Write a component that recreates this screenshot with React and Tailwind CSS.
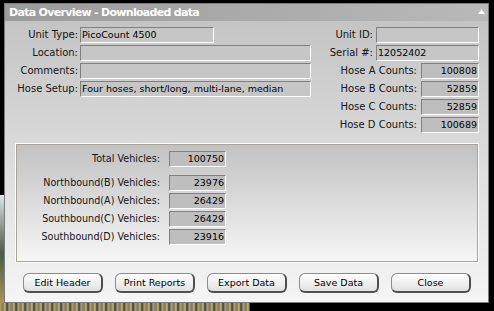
import React from "react";

const inputBase =
  "h-[16px] border border-t-[#808080] border-l-[#808080] border-r-white border-b-white flex items-center text-[9.5px] leading-none text-black overflow-hidden whitespace-nowrap";

function TextBox({ w, children }) {
  return <div className={`${inputBase} ${w} bg-[#c6c6c6] pl-[1px]`}>{children}</div>;
}

function NumBox({ w, children }) {
  return (
    <div className={`${inputBase} ${w} bg-[#bebebe] justify-end pr-[1px]`}>{children}</div>
  );
}

function Label({ w, size = "text-[10px]", children }) {
  return (
    <div className={`${w} ${size} text-right leading-none text-[#141414] whitespace-nowrap`}>{children}</div>
  );
}

function Button({ children }) {
  return (
    <div className="w-[80px] h-[20px] rounded-[6px] border border-t-[#8c8c8c] border-l-[#8c8c8c] border-r-2 border-b-2 border-r-[#505050] border-b-[#505050] bg-linear-to-b from-white to-[#e2e2e2] flex items-center justify-center text-[9.5px] leading-none text-black">
      {children}
    </div>
  );
}

export default function App() {
  return (
    <div className="relative w-[494px] h-[311px] bg-black overflow-hidden font-['DejaVu_Sans',sans-serif]">
      {/* desktop wallpaper peeking out */}
      <div className="absolute left-0 top-[195px] w-[250px] h-[116px] bg-linear-to-b from-[#dfe7ef] via-[#4c5a48] to-[#b59f58]" />
      <div className="absolute left-0 top-[303px] w-[250px] h-[8px] bg-[repeating-linear-gradient(90deg,#b9a458_0px,#77746a_3px,#cdb96c_5px,#3a3a34_7px,#9d9686_9px)]" />

      {/* window */}
      <div className="absolute left-[4px] top-[3px] w-[485px] h-[300px] border border-[#7c7c7c] flex flex-col">
        {/* title bar */}
        <div className="h-[17px] shrink-0 bg-linear-to-r from-[#9b9b9b] to-[#b9b9b9] flex items-center justify-between pl-[4px] pr-[3px]">
          <span className="text-white font-bold text-[11px] leading-none tracking-[-0.7px]">
            Data Overview - Downloaded data
          </span>
          <svg width="7" height="5" viewBox="0 0 7 5" className="mb-[2px]">
            <polygon points="3.5,0 7,5 0,5" fill="#ffffff" />
          </svg>
        </div>

        {/* body */}
        <div className="flex-1 bg-linear-to-b from-[#c4c4c4] to-[#f5f5f5] flex flex-col">
          {/* top section */}
          <div className="flex justify-between pt-[6px] pr-[9px]">
            <div className="flex flex-col gap-[2px]">
              <div className="flex items-center">
                <Label w="w-[73px]">Unit Type:</Label>
                <div className="ml-[2px]">
                  <TextBox w="w-[134px]">PicoCount 4500</TextBox>
                </div>
              </div>
              <div className="flex items-center">
                <Label w="w-[73px]">Location:</Label>
                <div className="ml-[2px]">
                  <TextBox w="w-[231px]" />
                </div>
              </div>
              <div className="flex items-center">
                <Label w="w-[73px]">Comments:</Label>
                <div className="ml-[2px]">
                  <TextBox w="w-[231px]" />
                </div>
              </div>
              <div className="flex items-center">
                <Label w="w-[73px]">Hose Setup:</Label>
                <div className="ml-[2px]">
                  <TextBox w="w-[231px]">Four hoses, short/long, multi-lane, median</TextBox>
                </div>
              </div>
            </div>

            <div className="flex flex-col gap-[2px] items-end">
              <div className="flex items-center">
                <Label w="w-auto">Unit ID:</Label>
                <div className="ml-[3px]">
                  <TextBox w="w-[103px]" />
                </div>
              </div>
              <div className="flex items-center">
                <Label w="w-auto">Serial #:</Label>
                <div className="ml-[3px]">
                  <TextBox w="w-[103px]">12052402</TextBox>
                </div>
              </div>
              {[
                ["Hose A Counts:", "100808"],
                ["Hose B Counts:", "52859"],
                ["Hose C Counts:", "52859"],
                ["Hose D Counts:", "100689"],
              ].map(([l, v]) => (
                <div key={l} className="flex items-center">
                  <Label w="w-auto">{l}</Label>
                  <div className="ml-[4px]">
                    <NumBox w="w-[58px]">{v}</NumBox>
                  </div>
                </div>
              ))}
            </div>
          </div>

          {/* group box */}
          <div className="mt-[10px] ml-[10px] mr-[9px] h-[120px] border border-white">
            <div className="h-full border border-[#a8a596] bg-linear-to-b from-[#c2c2c2] to-[#f6f6f6] pt-[6px] flex flex-col">
              <div className="flex items-center">
                <Label w="w-[143px]" size="text-[9.6px]">Total Vehicles:</Label>
                <div className="ml-[9px]">
                  <NumBox w="w-[57px]">100750</NumBox>
                </div>
              </div>
              <div className="flex flex-col gap-[2px] mt-[8px]">
                {[
                  ["Northbound(B) Vehicles:", "23976"],
                  ["Northbound(A) Vehicles:", "26429"],
                  ["Southbound(C) Vehicles:", "26429"],
                  ["Southbound(D) Vehicles:", "23916"],
                ].map(([l, v]) => (
                  <div key={l} className="flex items-center">
                    <Label w="w-[143px]" size="text-[9.6px]">{l}</Label>
                    <div className="ml-[9px]">
                      <NumBox w="w-[57px]">{v}</NumBox>
                    </div>
                  </div>
                ))}
              </div>
            </div>
          </div>

          {/* buttons */}
          <div className="mt-[10px] ml-[18px] flex gap-[12px]">
            <Button>Edit Header</Button>
            <Button>Print Reports</Button>
            <Button>Export Data</Button>
            <Button>Save Data</Button>
            <Button>Close</Button>
          </div>
        </div>
      </div>
    </div>
  );
}
